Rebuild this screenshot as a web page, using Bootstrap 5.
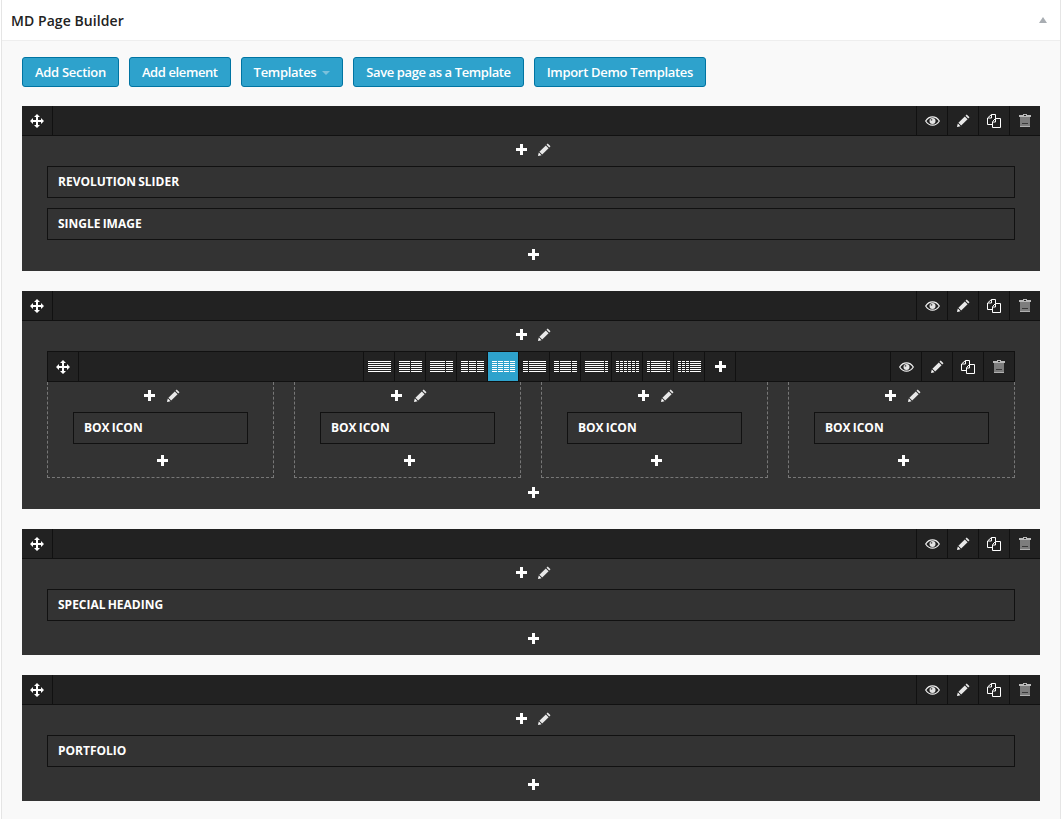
<!DOCTYPE html>
<html lang="en">
<head>
<meta charset="UTF-8">
<title>MD Page Builder</title>
<link href="https://cdn.jsdelivr.net/npm/bootstrap@5.3.0/dist/css/bootstrap.min.css" rel="stylesheet">
<style>
body { background: #fff; font-family: "Open Sans", "Liberation Sans", sans-serif; overflow: hidden; }
.builder-box { margin: 0 2px 0 1px; min-height: 100vh; background: #f9f9f9; border-color: #e5e5e5; border-width: 0 1px; border-radius: 0; }
.builder-head { height: 41px; padding: 0 13px 0 9px; background: #fff; border-bottom: 1px solid #eee; font-size: 14px; font-weight: 600; letter-spacing: .07px; color: #222; }
.builder-body { padding: 16px 20px 0 20px; }
.top-btn { height: 30px; padding: 0 12px; font-size: 13px; font-weight: 600; letter-spacing: -.3px; line-height: 28px; color: #fff; background: #2ea2cc; border: 1px solid #0074a2; border-radius: 3px; }
.top-btn:hover { color: #fff; background: #1e8cbe; border-color: #0074a2; }
.top-btn.dropdown-toggle::after { margin-left: 6px; vertical-align: 2px; border-top-color: #7cc1dc; border-width: 4px 4px 0; }
.top-btn.tight-btn { letter-spacing: -.4px; }
.btn-row { margin-bottom: 19px; gap: 10px; }
.md-section { margin-bottom: 20px; background: #333; }
.bar { height: 30px; background: #222; border-bottom: 1px solid #111; }
.bar-row { height: 31px; border: 1px solid #111; }
.cell { width: 31px; flex: none; height: 29px; border-left: 1px solid #111; color: #fff; }
.cell:first-child { border-left: 0; border-right: 1px solid #111; }
.bar-tools .cell:first-child { border-left: 1px solid #111; border-right: 0; }
.layouts { margin-left: 284px; }
.layouts .cell:first-child { border-left: 1px solid #111; border-right: 0; }
.layouts .cell:last-child { border-right: 1px solid #111; width: 32px; }
.cell-on { background: #2ea2cc; }
.add-row { height: 30px; padding: 0 0 4px 4px; color: #fff; gap: 11px; }
.col-box .add-row { padding-left: 3px; gap: 12px; }
.add-end { height: 34px; color: #fff; padding-left: 4px; }
.add-end-short { height: 31px; padding-bottom: 2px; }
.add-col { height: 33px; padding-bottom: 1px; color: #fff; padding-left: 3px; }
.md-inner { padding: 0 25px; }
.el-box { height: 32px; margin-bottom: 10px; padding: 0 10px; background: #333; border: 1px solid #111; color: #fff; font-size: 12px; font-weight: 700; word-spacing: -1px; }
.el-box:last-child, .col-box .el-box { margin-bottom: 0; }
.col-list { gap: 20px; }
.col-box { width: 227px; padding: 0 25px; border: 1px dashed #777; border-top: 0; }
</style>
</head>
<body>

<svg width="0" height="0" class="d-block">
    <symbol id="i-move" viewBox="0 0 14 14"><path fill="#fff" d="M7 0l3 3H8v3h3V4l3 3-3 3V8H8v3h2l-3 3-3-3h2V8H3v2L0 7l3-3v2h3V3H4z"/></symbol>
    <symbol id="i-plus" viewBox="0 0 11 11"><path fill="#fff" d="M4 0h3v4h4v3H7v4H4V7H0V4h4z"/></symbol>
    <symbol id="i-pen" viewBox="0 0 13 13"><path fill="#e8e8e8" d="M9.700.5l2.800 2.800-1.200 1.200-2.800-2.800zM7.800 2.400l2.800 2.800-6.400 6.400-2.800-2.800z"/><path fill="#fff" d="M.8 9.500l2.700 2.700-3.500.8z"/></symbol>
    <symbol id="i-eye" viewBox="0 0 15 10"><path fill="none" stroke="#f2f2f2" stroke-width="1.200" d="M.7 5C2.400 2.200 4.500.8 7.500.8s5.100 1.400 6.800 4.200c-1.700 2.800-3.800 4.200-6.800 4.200S2.400 7.800.7 5z"/><circle cx="7.500" cy="5" r="3" fill="#e4e4e4"/><circle cx="6.500" cy="3.800" r=".9" fill="#555"/></symbol>
    <symbol id="i-copy" viewBox="0 0 14 14"><path fill="none" stroke="#fff" d="M4.500 .5h4v4M5 10.500H.500V4L4.500.5V4H1M5.500 10V7.500l3-3h5v9h-8zM8.500 4.500V8H6"/></symbol>
    <symbol id="i-trash" viewBox="0 0 12 13"><path fill="#bbb" d="M4 0h4v1h4v2H0V1h4z"/><path fill="#222" d="M5 1h2v1H5z"/><path fill="#7d7d7d" d="M1 3h10v10H1z"/><path fill="#3a3a3a" d="M3 9h6v1H3z"/><path fill="#b0b0b0" d="M1 12h10v1H1z"/></symbol>
    <symbol id="i-up" viewBox="0 0 8 6"><path fill="#a8adb2" d="M4 0l4 6H0z"/></symbol>
</svg>

<div class="card builder-box">
    <div class="builder-head d-flex align-items-center justify-content-between">
        <span>MD Page Builder</span>
        <svg width="8" height="6"><use href="#i-up"/></svg>
    </div>
    <div class="builder-body">
        <div class="d-flex btn-row">
            <button class="btn top-btn">Add Section</button>
            <button class="btn top-btn tight-btn">Add element</button>
            <button class="btn top-btn dropdown-toggle">Templates</button>
            <button class="btn top-btn tight-btn">Save page as a Template</button>
            <button class="btn top-btn">Import Demo Templates</button>
        </div>

        <div class="md-section">
            <div class="bar d-flex justify-content-between">
                <div class="cell d-flex align-items-center justify-content-center"><svg width="14" height="14"><use href="#i-move"/></svg></div>
                <div class="bar-tools d-flex">
                    <div class="cell d-flex align-items-center justify-content-center"><svg width="15" height="10"><use href="#i-eye"/></svg></div>
                    <div class="cell d-flex align-items-center justify-content-center"><svg width="13" height="13"><use href="#i-pen"/></svg></div>
                    <div class="cell d-flex align-items-center justify-content-center"><svg width="14" height="14"><use href="#i-copy"/></svg></div>
                    <div class="cell d-flex align-items-center justify-content-center"><svg width="12" height="13"><use href="#i-trash"/></svg></div>
                </div>
            </div>
            <div class="add-row d-flex align-items-center justify-content-center"><svg width="11" height="11"><use href="#i-plus"/></svg><svg width="13" height="13"><use href="#i-pen"/></svg></div>
            <div class="md-inner">
                <div class="el-box d-flex align-items-center">REVOLUTION SLIDER</div>
                <div class="el-box d-flex align-items-center">SINGLE IMAGE</div>
            </div>
            <div class="add-end add-end-short d-flex align-items-center justify-content-center"><svg width="11" height="11"><use href="#i-plus"/></svg></div>
        </div>

        <div class="md-section">
            <div class="bar d-flex justify-content-between">
                <div class="cell d-flex align-items-center justify-content-center"><svg width="14" height="14"><use href="#i-move"/></svg></div>
                <div class="bar-tools d-flex">
                    <div class="cell d-flex align-items-center justify-content-center"><svg width="15" height="10"><use href="#i-eye"/></svg></div>
                    <div class="cell d-flex align-items-center justify-content-center"><svg width="13" height="13"><use href="#i-pen"/></svg></div>
                    <div class="cell d-flex align-items-center justify-content-center"><svg width="14" height="14"><use href="#i-copy"/></svg></div>
                    <div class="cell d-flex align-items-center justify-content-center"><svg width="12" height="13"><use href="#i-trash"/></svg></div>
                </div>
            </div>
            <div class="add-row d-flex align-items-center justify-content-center"><svg width="11" height="11"><use href="#i-plus"/></svg><svg width="13" height="13"><use href="#i-pen"/></svg></div>
            <div class="md-inner">
                <div class="bar bar-row d-flex">
                    <div class="cell d-flex align-items-center justify-content-center"><svg width="14" height="14"><use href="#i-move"/></svg></div>
                    <div class="layouts d-flex">
                        <div class="cell d-flex align-items-center justify-content-center"><svg width="23" height="11" fill="none" stroke="#fff" stroke-dasharray="1 1"><path stroke-width="23" d="M11.500 0V11"/></svg></div>
                        <div class="cell d-flex align-items-center justify-content-center"><svg width="23" height="11" fill="none" stroke="#fff" stroke-dasharray="1 1"><path stroke-width="11" d="M5.500 0V11M17.500 0V11"/></svg></div>
                        <div class="cell d-flex align-items-center justify-content-center"><svg width="23" height="11" fill="none" stroke="#fff" stroke-dasharray="1 1"><path stroke-width="15" d="M7.500 0V11"/><path stroke-width="7" d="M19.500 0V11"/></svg></div>
                        <div class="cell d-flex align-items-center justify-content-center"><svg width="23" height="11" fill="none" stroke="#fff" stroke-dasharray="1 1"><path stroke-width="7" d="M3.500 0V11M11.500 0V11M19.500 0V11"/></svg></div>
                        <div class="cell cell-on d-flex align-items-center justify-content-center"><svg width="23" height="11" fill="none" stroke="#fff" stroke-dasharray="1 1"><path stroke-width="5" d="M2.500 0V11M8.500 0V11M14.500 0V11M20.500 0V11"/></svg></div>
                        <div class="cell d-flex align-items-center justify-content-center"><svg width="23" height="11" fill="none" stroke="#fff" stroke-dasharray="1 1"><path stroke-width="5" d="M2.500 0V11"/><path stroke-width="17" d="M14.500 0V11"/></svg></div>
                        <div class="cell d-flex align-items-center justify-content-center"><svg width="23" height="11" fill="none" stroke="#fff" stroke-dasharray="1 1"><path stroke-width="5" d="M2.500 0V11M20.500 0V11"/><path stroke-width="11" d="M11.500 0V11"/></svg></div>
                        <div class="cell d-flex align-items-center justify-content-center"><svg width="23" height="11" fill="none" stroke="#fff" stroke-dasharray="1 1"><path stroke-width="19" d="M9.500 0V11"/><path stroke-width="3" d="M21.500 0V11"/></svg></div>
                        <div class="cell d-flex align-items-center justify-content-center"><svg width="23" height="11" fill="none" stroke="#fff" stroke-dasharray="1 1"><path stroke-width="3" d="M1.500 0V11M5.500 0V11M9.500 0V11M13.500 0V11M17.500 0V11M21.500 0V11"/></svg></div>
                        <div class="cell d-flex align-items-center justify-content-center"><svg width="23" height="11" fill="none" stroke="#fff" stroke-dasharray="1 1"><path stroke-width="3" d="M1.500 0V11M21.500 0V11"/><path stroke-width="15" d="M11.500 0V11"/></svg></div>
                        <div class="cell d-flex align-items-center justify-content-center"><svg width="23" height="11" fill="none" stroke="#fff" stroke-dasharray="1 1"><path stroke-width="3" d="M1.500 0V11M5.500 0V11M9.500 0V11"/><path stroke-width="11" d="M17.500 0V11"/></svg></div>
                        <div class="cell d-flex align-items-center justify-content-center"><svg width="11" height="11"><use href="#i-plus"/></svg></div>
                    </div>
                    <div class="bar-tools d-flex ms-auto">
                        <div class="cell d-flex align-items-center justify-content-center"><svg width="15" height="10"><use href="#i-eye"/></svg></div>
                        <div class="cell d-flex align-items-center justify-content-center"><svg width="13" height="13"><use href="#i-pen"/></svg></div>
                        <div class="cell d-flex align-items-center justify-content-center"><svg width="14" height="14"><use href="#i-copy"/></svg></div>
                        <div class="cell d-flex align-items-center justify-content-center"><svg width="12" height="13"><use href="#i-trash"/></svg></div>
                    </div>
                </div>
                <div class="d-flex col-list">
                    <div class="col-box">
                        <div class="add-row d-flex align-items-center justify-content-center"><svg width="11" height="11"><use href="#i-plus"/></svg><svg width="13" height="13"><use href="#i-pen"/></svg></div>
                        <div class="el-box d-flex align-items-center">BOX ICON</div>
                        <div class="add-col d-flex align-items-center justify-content-center"><svg width="11" height="11"><use href="#i-plus"/></svg></div>
                    </div>
                    <div class="col-box">
                        <div class="add-row d-flex align-items-center justify-content-center"><svg width="11" height="11"><use href="#i-plus"/></svg><svg width="13" height="13"><use href="#i-pen"/></svg></div>
                        <div class="el-box d-flex align-items-center">BOX ICON</div>
                        <div class="add-col d-flex align-items-center justify-content-center"><svg width="11" height="11"><use href="#i-plus"/></svg></div>
                    </div>
                    <div class="col-box">
                        <div class="add-row d-flex align-items-center justify-content-center"><svg width="11" height="11"><use href="#i-plus"/></svg><svg width="13" height="13"><use href="#i-pen"/></svg></div>
                        <div class="el-box d-flex align-items-center">BOX ICON</div>
                        <div class="add-col d-flex align-items-center justify-content-center"><svg width="11" height="11"><use href="#i-plus"/></svg></div>
                    </div>
                    <div class="col-box">
                        <div class="add-row d-flex align-items-center justify-content-center"><svg width="11" height="11"><use href="#i-plus"/></svg><svg width="13" height="13"><use href="#i-pen"/></svg></div>
                        <div class="el-box d-flex align-items-center">BOX ICON</div>
                        <div class="add-col d-flex align-items-center justify-content-center"><svg width="11" height="11"><use href="#i-plus"/></svg></div>
                    </div>
                </div>
            </div>
            <div class="add-end add-end-short d-flex align-items-center justify-content-center"><svg width="11" height="11"><use href="#i-plus"/></svg></div>
        </div>

        <div class="md-section">
            <div class="bar d-flex justify-content-between">
                <div class="cell d-flex align-items-center justify-content-center"><svg width="14" height="14"><use href="#i-move"/></svg></div>
                <div class="bar-tools d-flex">
                    <div class="cell d-flex align-items-center justify-content-center"><svg width="15" height="10"><use href="#i-eye"/></svg></div>
                    <div class="cell d-flex align-items-center justify-content-center"><svg width="13" height="13"><use href="#i-pen"/></svg></div>
                    <div class="cell d-flex align-items-center justify-content-center"><svg width="14" height="14"><use href="#i-copy"/></svg></div>
                    <div class="cell d-flex align-items-center justify-content-center"><svg width="12" height="13"><use href="#i-trash"/></svg></div>
                </div>
            </div>
            <div class="add-row d-flex align-items-center justify-content-center"><svg width="11" height="11"><use href="#i-plus"/></svg><svg width="13" height="13"><use href="#i-pen"/></svg></div>
            <div class="md-inner">
                <div class="el-box d-flex align-items-center">SPECIAL HEADING</div>
            </div>
            <div class="add-end d-flex align-items-center justify-content-center"><svg width="11" height="11"><use href="#i-plus"/></svg></div>
        </div>

        <div class="md-section">
            <div class="bar d-flex justify-content-between">
                <div class="cell d-flex align-items-center justify-content-center"><svg width="14" height="14"><use href="#i-move"/></svg></div>
                <div class="bar-tools d-flex">
                    <div class="cell d-flex align-items-center justify-content-center"><svg width="15" height="10"><use href="#i-eye"/></svg></div>
                    <div class="cell d-flex align-items-center justify-content-center"><svg width="13" height="13"><use href="#i-pen"/></svg></div>
                    <div class="cell d-flex align-items-center justify-content-center"><svg width="14" height="14"><use href="#i-copy"/></svg></div>
                    <div class="cell d-flex align-items-center justify-content-center"><svg width="12" height="13"><use href="#i-trash"/></svg></div>
                </div>
            </div>
            <div class="add-row d-flex align-items-center justify-content-center"><svg width="11" height="11"><use href="#i-plus"/></svg><svg width="13" height="13"><use href="#i-pen"/></svg></div>
            <div class="md-inner">
                <div class="el-box d-flex align-items-center">PORTFOLIO</div>
            </div>
            <div class="add-end d-flex align-items-center justify-content-center"><svg width="11" height="11"><use href="#i-plus"/></svg></div>
        </div>
    </div>
</div>

<script src="https://cdn.jsdelivr.net/npm/bootstrap@5.3.0/dist/js/bootstrap.bundle.min.js"></script>
</body>
</html>
